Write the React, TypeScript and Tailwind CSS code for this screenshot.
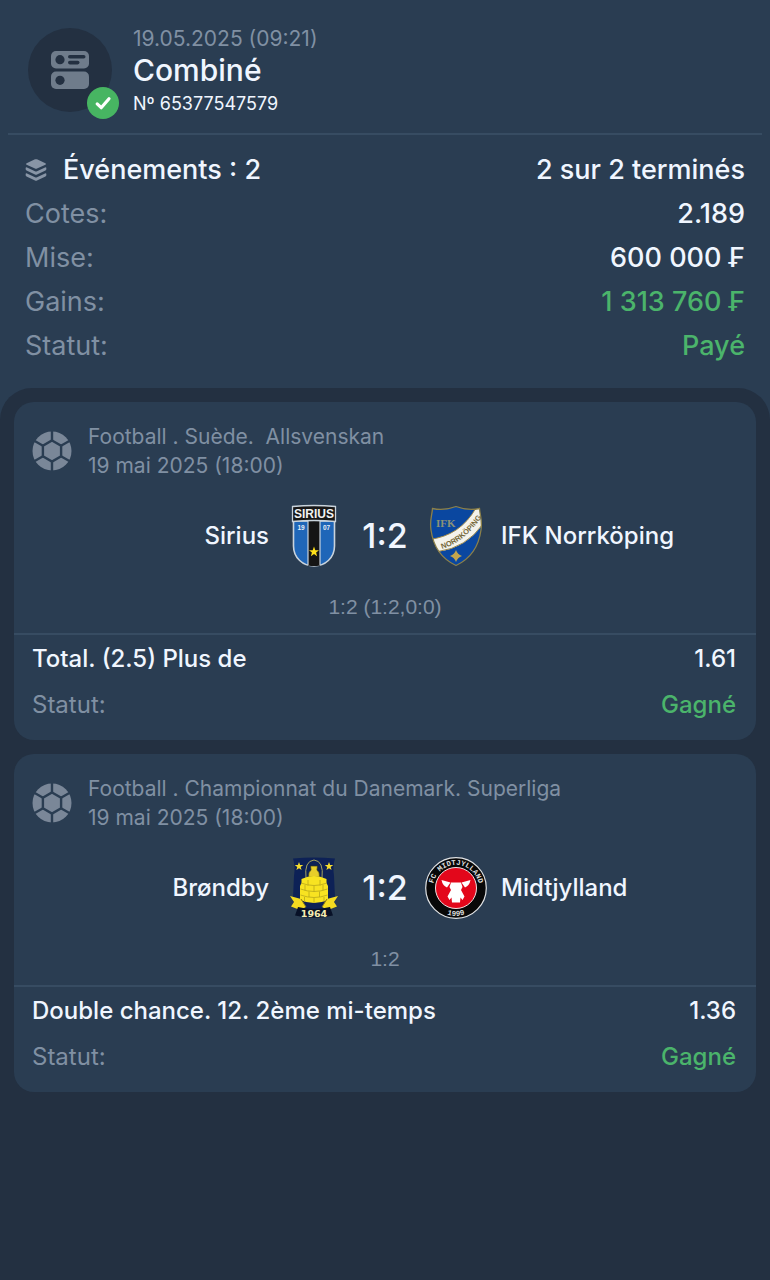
import type { ReactNode } from "react";

function TicketIcon() {
  return (
    <svg viewBox="0 0 38 38" className="size-[38px]" aria-hidden="true">
      <rect x="0" y="0" width="38" height="17.5" rx="5" fill="#6f7c8b" />
      <rect x="0" y="20.5" width="38" height="17.5" rx="5" fill="#6f7c8b" />
      <circle cx="9" cy="8.7" r="4.6" fill="#233041" />
      <circle cx="9" cy="29.3" r="4.6" fill="#233041" />
      <rect x="17" y="4" width="17.5" height="3.6" rx="1.8" fill="#233041" />
      <rect x="17" y="9.8" width="11.5" height="3.6" rx="1.8" fill="#233041" />
    </svg>
  );
}

function CheckIcon() {
  return (
    <svg viewBox="0 0 32 32" className="size-8" aria-hidden="true">
      <circle cx="16" cy="16" r="16" fill="#47b562" />
      <path d="M10.2 16.9 14.2 20.7 22 11.8" fill="none" stroke="#fff" strokeWidth="3.2" strokeLinecap="round" strokeLinejoin="round" />
    </svg>
  );
}

function LayersIcon() {
  return (
    <svg viewBox="0 0 22 22" className="size-[22px]" fill="#8895a6" aria-hidden="true">
      <path d="M10 .3Q11 0 12 .3L20.4 4.2Q21.8 5 20.4 5.8L12 9.6Q11 10 10 9.6L1.6 5.800Q.2 5 1.600 4.200Z" />
      <path d="M.8 8.600Q1.300 8.200 2 8.500L10 12.200Q11 12.600 12 12.200L20 8.500Q20.700 8.200 21.200 8.600Q22 10.500 20.500 11.400L12 15.500Q11 16 10 15.500L1.500 11.400Q0 10.500 .8 8.600Z" />
      <path d="M.8 14.600Q1.300 14.200 2 14.500L10 18.200Q11 18.600 12 18.200L20 14.500Q20.700 14.200 21.200 14.600Q22 16.500 20.500 17.400L12 21.500Q11 22 10 21.500L1.500 17.400Q0 16.500 .8 14.600Z" />
    </svg>
  );
}

function FootballIcon() {
  return (
    <svg viewBox="0 0 40 40" className="size-10 shrink-0" aria-hidden="true">
      <circle cx="20" cy="20" r="19.5" fill="#7a8798" />
      <g stroke="#2a3d52" strokeWidth="2.4" fill="none">
        <path d="M20 0V9.5M20 30.5V40M2.700 10 11 14.700M37.300 10 29 14.700M2.700 30 11 25.300M37.300 30 29 25.300" />
        <path d="M20 9.500 29.100 14.750V25.250L20 30.500 10.900 25.250V14.750Z" />
      </g>
    </svg>
  );
}

function SiriusCrest() {
  return (
    <svg viewBox="0 0 64 64" className="size-16" role="img" aria-label="Sirius">
      <path d="M11.500 17H52.500V42C52.500 54 43 62 32 62S11.500 54 11.500 42Z" fill="#1f66b8" stroke="#c9d3dc" strokeWidth="1.600" />
      <path d="M26 17H38V61.400Q32 62.800 26 61.400Z" fill="#151515" />
      <path d="M26 17V61M38 17V61" stroke="#c9d3dc" strokeWidth="1.200" />
      <path d="M10.500 2.500Q32 .5 53.500 2.500V17.500Q32 15.500 10.500 17.500Z" fill="#171717" stroke="#c9d3dc" strokeWidth="1.300" />
      <text x="32" y="14.300" textAnchor="middle" fontFamily="Liberation Sans Narrow, Liberation Sans, sans-serif" fontWeight="700" fontSize="12" fill="#f2f2f2">SIRIUS</text>
      <text x="19" y="25.500" textAnchor="middle" fontFamily="Liberation Sans, sans-serif" fontWeight="700" fontSize="6.500" fill="#e6edf5">19</text>
      <text x="44.500" y="25.500" textAnchor="middle" fontFamily="Liberation Sans, sans-serif" fontWeight="700" fontSize="6.500" fill="#e6edf5">07</text>
      <path d="M32 42.500 33.300 46.200 37 46.300 34.100 48.600 35.100 52.300 32 50.100 28.900 52.300 29.900 48.600 27 46.300 30.700 46.200Z" fill="#ffe11a" />
    </svg>
  );
}

function NorrkopingCrest() {
  const shield =
    "M8.500 4.500Q20 7 32 2.500Q44 7 55.500 4.500C56 12 58.500 16 57 26C54.500 44 46 55 32 61.500C18 55 9.500 44 7 26C5.500 16 8 12 8.500 4.500Z";
  return (
    <svg viewBox="0 0 64 64" className="size-16" role="img" aria-label="IFK Norrköping">
      <defs>
        <clipPath id="ifk-shield">
          <path d={shield} />
        </clipPath>
        <path id="ifk-band" d="M18 45Q40 38.500 57 14" />
      </defs>
      <g clipPath="url(#ifk-shield)">
        <rect width="64" height="64" fill="#0a47a0" />
        <path d="M5 35.500Q36 32 52 4L66 6 59 20Q42 44 14 47.500Z" fill="#f4f3ec" stroke="#a18b4b" strokeWidth="1" />
      </g>
      <path d={shield} fill="none" stroke="#8c8049" strokeWidth="1.300" />
      <text x="12" y="22.500" fontFamily="Liberation Serif, serif" fontWeight="700" fontSize="11" fill="#8b9277">IFK</text>
      <text fontFamily="Liberation Sans Narrow, Liberation Sans, sans-serif" fontWeight="700" fontSize="7.500" fill="#75683a">
        <textPath href="#ifk-band">NORRKÖPING</textPath>
      </text>
      <path d="M32 46Q33.500 50.500 38 52Q33.500 53.500 32 58Q30.500 53.500 26 52Q30.500 50.500 32 46Z" fill="#c3a54c" />
    </svg>
  );
}

function BrondbyCrest() {
  return (
    <svg viewBox="0 0 64 64" className="size-16" role="img" aria-label="Brøndby">
      <path d="M11 2.500Q32 .5 53 2.500Q50.500 10 52 20L53 42Q53 54 32 60Q11 54 11 42L12 20Q13.500 10 11 2.500Z" fill="#0d2156" />
      <path d="M17 6 18.100 9 21.300 9 18.700 11 19.600 14 17 12.200 14.400 14 15.300 11 12.700 9 15.900 9Z" fill="#f5dd2f" />
      <path d="M47 6 48.100 9 51.300 9 48.700 11 49.600 14 47 12.200 44.400 14 45.300 11 42.700 9 45.900 9Z" fill="#f5dd2f" />
      <path d="M24 22Q22 5 32 4Q42 5 40 22" fill="none" stroke="#a7a55e" strokeWidth="1" />
      <path d="M28.500 10H35.500L35 14Q38 16 37.500 21H26.500Q26 16 29 14Z" fill="#e7ce29" stroke="#303719" strokeWidth=".7" />
      <path d="M19.500 23Q32 17 44.500 23V27L46 30V44Q32 50 18 44V30L19.500 27Z" fill="#f8e321" />
      <path d="M19 27Q32 32 45 27M18.500 33Q32 38 45.500 33M18.500 39Q32 44 45.500 39M26 24V29.500M38 24V29.500M32 30V35.500M23 29V34.500M41 29V34.500M27 35.500V41M37.500 35.500V41M32 42V47M22.500 41V46M42 41V46" fill="none" stroke="#b7a71b" strokeWidth=".8" />
      <path d="M8 40 19 43 24 51 18 54 9 50.500 12 46ZM56 40 45 43 40 51 46 54 55 50.500 52 46Z" fill="#f5dc20" />
      <path d="M19 43 24 51M45 43 40 51" stroke="#8d7d18" strokeWidth="1" />
      <path d="M16 51Q32 55 48 51L51 59.500Q32 64 13 59.500Z" fill="#081127" />
      <text x="32" y="60.500" textAnchor="middle" fontFamily="DejaVu Sans, sans-serif" fontWeight="700" fontSize="9.500" fill="#f3ecb2">1964</text>
    </svg>
  );
}

function MidtjyllandCrest() {
  return (
    <svg viewBox="0 0 64 64" className="size-16" role="img" aria-label="Midtjylland">
      <defs>
        <path id="fcm-top" d="M9.800 38A23 23 0 1 1 54.200 38" />
        <path id="fcm-bottom" d="M7.800 46A28 28 0 0 0 56.200 46" />
      </defs>
      <circle cx="32" cy="32" r="30.300" fill="#080808" stroke="#e0e2e4" strokeWidth="1.200" />
      <circle cx="32" cy="32" r="20.500" fill="#e3071b" stroke="#f3dfe0" strokeWidth="1" />
      <text fontFamily="Liberation Mono, monospace" fontWeight="700" fontSize="7.500" fill="#dedede" textAnchor="middle">
        <textPath href="#fcm-top" startOffset="50%">FC MIDTJYLLAND</textPath>
      </text>
      <text fontFamily="Liberation Mono, monospace" fontWeight="700" fontSize="7.500" fill="#dedede" textAnchor="middle">
        <textPath href="#fcm-bottom" startOffset="50%">1999</textPath>
      </text>
      <path d="M17.500 24 26.500 26.500 23 31.500Q18.500 29.500 17.500 24ZM46.500 24 37.500 26.500 41 31.500Q45.500 29.500 46.500 24Z" fill="#fff" />
      <path d="M27 26.500H37L38.500 31 37 34 40.500 40.500 38.500 44 36.500 41.500 36 46.500H28L27.500 41.500 25.500 44 23.500 40.500 27 34 25.500 31Z" fill="#fff" />
    </svg>
  );
}

type Row = { label: string; value: string; tone: string };

const summary: Row[] = [
  { label: "Cotes:", value: "2.189", tone: "text-[#f0f6ff]" },
  { label: "Mise:", value: "600 000 ₣", tone: "text-[#f0f6ff]" },
  { label: "Gains:", value: "1 313 760 ₣", tone: "text-[#4bb46b]" },
  { label: "Statut:", value: "Payé", tone: "text-[#4bb46b]" },
];

type Match = {
  league: string;
  date: string;
  home: string;
  away: string;
  homeCrest: ReactNode;
  awayCrest: ReactNode;
  score: string;
  detail: string;
  market: string;
  odds: string;
};

const matches: Match[] = [
  {
    league: "Football . Suède.  Allsvenskan",
    date: "19 mai 2025 (18:00)",
    home: "Sirius",
    away: "IFK Norrköping",
    homeCrest: <SiriusCrest />,
    awayCrest: <NorrkopingCrest />,
    score: "1:2",
    detail: "1:2 (1:2,0:0)",
    market: "Total. (2.5) Plus de",
    odds: "1.61",
  },
  {
    league: "Football . Championnat du Danemark. Superliga",
    date: "19 mai 2025 (18:00)",
    home: "Brøndby",
    away: "Midtjylland",
    homeCrest: <BrondbyCrest />,
    awayCrest: <MidtjyllandCrest />,
    score: "1:2",
    detail: "1:2",
    market: "Double chance. 12. 2ème mi-temps",
    odds: "1.36",
  },
];

function MatchCard({ match }: { match: Match }) {
  return (
    <article className="rounded-[20px] bg-[#2a3d52] pb-3">
      <header className="flex items-center gap-4 px-[18px] pt-5 text-[21px] leading-[29px] text-[#8090a3]">
        <FootballIcon />
        <div>
          <p className="whitespace-pre-wrap">{match.league}</p>
          <p>{match.date}</p>
        </div>
      </header>
      <div className="mt-6 grid grid-cols-[1fr_auto_1fr] items-center gap-[13px] text-2xl font-medium text-[#f0f6ff]">
        <span className="text-right">{match.home}</span>
        <div className="flex items-center">
          {match.homeCrest}
          <strong className="w-[78px] text-center text-[34px] leading-10 font-medium">{match.score}</strong>
          {match.awayCrest}
        </div>
        <span>{match.away}</span>
      </div>
      <p className="mt-[25px] pb-3 text-center font-['Liberation_Sans',sans-serif] text-[21px] leading-7 text-[#8090a3]">
        {match.detail}
      </p>
      <div className="border-t-2 border-[#374c62] pt-px pr-5 pl-[18px] text-2xl leading-[46px]">
        <div className="flex justify-between font-medium text-[#f0f6ff]">
          <span>{match.market}</span>
          <span>{match.odds}</span>
        </div>
        <div className="flex justify-between">
          <span className="text-[#8090a3]">Statut:</span>
          <span className="font-medium text-[#4bb46b]">Gagné</span>
        </div>
      </div>
    </article>
  );
}

export default function App() {
  return (
    <main className="flex min-h-screen flex-col bg-[#2a3d52] font-['Inter','Liberation_Sans',sans-serif]">
      <header className="mx-2 flex items-start gap-[21px] border-b-2 border-[#374c62] px-5 pt-7 pb-[15px]">
        <div className="relative flex size-[84px] shrink-0 items-center justify-center rounded-full bg-[#233041]">
          <TicketIcon />
          <span className="absolute -right-[7px] -bottom-[7px]">
            <CheckIcon />
          </span>
        </div>
        <div>
          <p className="text-[21px] leading-[22px] text-[#8090a3]">19.05.2025 (09:21)</p>
          <h1 className="text-3xl leading-10 font-medium text-[#f0f6ff]">Combiné</h1>
          <p className="text-lg leading-7 text-[#f0f6ff]">Nº 65377547579</p>
        </div>
      </header>
      <section className="px-[25px] pt-[13px] pb-5 text-[27px] leading-[44px]">
        <div className="flex justify-between font-medium text-[#f0f6ff]">
          <span className="flex items-center gap-4">
            <LayersIcon />
            Événements : 2
          </span>
          <span>2 sur 2 terminés</span>
        </div>
        {summary.map((row) => (
          <div key={row.label} className="flex justify-between">
            <span className="text-[#8090a3]">{row.label}</span>
            <span className={`font-medium ${row.tone}`}>{row.value}</span>
          </div>
        ))}
      </section>
      <section className="flex flex-1 flex-col gap-[14px] rounded-t-[32px] bg-[#233041] p-[14px]">
        {matches.map((match) => (
          <MatchCard key={match.home} match={match} />
        ))}
      </section>
    </main>
  );
}
